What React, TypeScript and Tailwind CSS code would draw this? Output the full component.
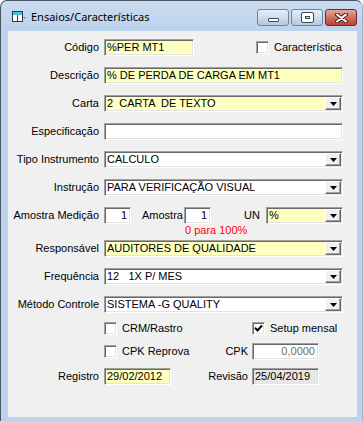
import React from "react";

const ui = "font-['Liberation_Sans',Arial,sans-serif] text-[11px] leading-[13px] text-black";

function Box({ className = "", children }: { className?: string; children?: React.ReactNode }) {
    return (
        <div
            className={`h-[17px] shrink-0 flex items-center border border-t-[#a0a0a0] border-l-[#a0a0a0] border-r-white border-b-white shadow-[inset_1px_1px_0_#696969,inset_-1px_-1px_0_#e3e3e3] ${className}`}
        >
            {children}
        </div>
    );
}

function Arrow() {
    return (
        <div className="ml-auto mr-[1px] h-[13px] w-[16px] shrink-0 flex items-center justify-center bg-[#f0f0f0] border border-t-white border-l-white border-r-[#696969] border-b-[#696969] shadow-[inset_-1px_-1px_0_#a0a0a0]">
            <svg width="7" height="4" viewBox="0 0 7 4">
                <path d="M0 0H7L3.5 4Z" fill="#000" />
            </svg>
        </div>
    );
}

function Select({ value, yellow, className = "w-[239px]" }: { value: string; yellow?: boolean; className?: string }) {
    return (
        <Box className={`${className} ${yellow ? "bg-[#ffffc0]" : "bg-white"}`}>
            <span className="pl-[2px] whitespace-pre truncate">{value}</span>
            <Arrow />
        </Box>
    );
}

function Check({ checked }: { checked?: boolean }) {
    return (
        <div className="h-[13px] w-[13px] shrink-0 bg-white border border-t-[#a0a0a0] border-l-[#a0a0a0] border-r-white border-b-white shadow-[inset_1px_1px_0_#696969,inset_-1px_-1px_0_#e3e3e3] flex items-center justify-center">
            {checked && (
                <svg width="9" height="9" viewBox="0 0 9 9">
                    <path d="M1 3.8L3.5 6.5L8 1.5" stroke="#000" strokeWidth="2" fill="none" />
                </svg>
            )}
        </div>
    );
}

function Row({ label, className = "mt-[11px]", children }: { label?: string; className?: string; children?: React.ReactNode }) {
    return (
        <div className={`flex items-center h-[17px] ${className}`}>
            <span className="w-[91px] shrink-0 text-right whitespace-nowrap">{label}</span>
            <div className="ml-[5px] flex items-center">{children}</div>
        </div>
    );
}

function TitleButton({ kind }: { kind: "min" | "max" | "close" }) {
    const base =
        kind === "close"
            ? "bg-gradient-to-b from-[#e4a89c] via-[#d0705f] to-[#c2402f] border-[#6b2a22]"
            : "bg-gradient-to-b from-[#e6eef8] via-[#cddcee] to-[#b4c8e0] border-[#71849c]";
    return (
        <div className={`w-[32px] h-[17px] rounded-[3px] border flex items-center justify-center ${base}`}>
            {kind === "min" && (
                <div className="mt-[5px] w-[11px] h-[4px] rounded-[1px] bg-white border border-[#3d4a5a]" />
            )}
            {kind === "max" && (
                <div className="w-[11px] h-[9px] rounded-[1px] border-[3px] border-white outline outline-1 outline-[#3d4a5a] shadow-[inset_0_0_0_1px_#3d4a5a]" />
            )}
            {kind === "close" && (
                <svg width="13" height="10" viewBox="0 0 13 10">
                    <path d="M2 1.5L11 8.5M11 1.5L2 8.5" stroke="#4a2420" strokeWidth="4" strokeLinecap="round" />
                    <path d="M2 1.5L11 8.5M11 1.5L2 8.5" stroke="#fff" strokeWidth="2" strokeLinecap="round" />
                </svg>
            )}
        </div>
    );
}

export default function App() {
    return (
        <div className="w-[363px] h-[421px] overflow-hidden bg-white">
            <div className="w-[363px] h-[421px] flex flex-col bg-[#bcd3ec] border-t border-l border-r border-t-[#4a5564] border-l-[#4a5564] border-r-[#9fb4cc] rounded-t-[7px]">
                {/* title bar */}
                <div className="h-[30px] shrink-0 flex items-center pl-[11px] pr-[5px] bg-gradient-to-b from-[#c9dbf0] to-[#bcd3ec] rounded-t-[7px]">
                    <svg width="14" height="12" viewBox="0 0 14 12" className="shrink-0 mt-[2px]">
                        <rect x="0.5" y="0.5" width="10" height="10" fill="#fff" stroke="#2d3a48" />
                        <rect x="1" y="1" width="9" height="3" fill="#3fc6d0" />
                        <rect x="5" y="4" width="1" height="6" fill="#2d3a48" />
                        <path d="M11 6H14L12.5 8Z" fill="#7c8794" />
                    </svg>
                    <span className="ml-[5px] font-['Noto_Sans',sans-serif] text-[11px] leading-[14px] text-black mt-[2px]">
                        Ensaios/Características
                    </span>
                    <div className="ml-auto flex gap-[2px] mt-[3px]">
                        <TitleButton kind="min" />
                        <TitleButton kind="max" />
                        <TitleButton kind="close" />
                    </div>
                </div>

                {/* client */}
                <div className="flex">
                    <div className={`ml-[7px] w-[349px] h-[386px] bg-[#f0f0f0] flex flex-col pt-[8px] ${ui}`}>
                        <Row label="Código" className="mt-0">
                            <Box className="w-[90px] bg-[#ffffc0]">
                                <span className="pl-[2px]">%PER MT1</span>
                            </Box>
                            <div className="ml-[62px] flex items-center">
                                <Check />
                                <span className="ml-[5px]">Característica</span>
                            </div>
                        </Row>
                        <Row label="Descrição">
                            <Box className="w-[239px] bg-[#ffffc0]">
                                <span className="pl-[2px]">% DE PERDA DE CARGA EM MT1</span>
                            </Box>
                        </Row>
                        <Row label="Carta">
                            <Select value="2  CARTA  DE TEXTO" yellow />
                        </Row>
                        <Row label="Especificação">
                            <Box className="w-[239px] bg-white" />
                        </Row>
                        <Row label="Tipo Instrumento">
                            <Select value="CALCULO" />
                        </Row>
                        <Row label="Instrução">
                            <Select value="PARA VERIFICAÇÃO VISUAL" />
                        </Row>
                        <Row label="Amostra Medição">
                            <Box className="w-[27px] bg-white justify-end">
                                <span className="pr-[3px]">1</span>
                            </Box>
                            <span className="ml-[11px] w-[42px]">Amostra</span>
                            <Box className="w-[27px] bg-white justify-end">
                                <span className="pr-[3px]">1</span>
                            </Box>
                            <span className="ml-[33px] w-[16px]">UN</span>
                            <Select value="%" yellow className="ml-[6px] w-[77px]" />
                        </Row>
                        <div className="h-[12px] pl-[177px] text-[#ff0000] leading-[12px]">0 para 100%</div>
                        <Row label="Responsável" className="mt-[4px]">
                            <Select value="AUDITORES DE QUALIDADE" yellow />
                        </Row>
                        <Row label="Frequência">
                            <Select value="12   1X P/ MES" />
                        </Row>
                        <Row label="Método Controle">
                            <Select value="SISTEMA -G QUALITY" />
                        </Row>
                        <Row className="mt-[7px]">
                            <div className="w-[148px] flex items-center">
                                <Check />
                                <span className="ml-[5px]">CRM/Rastro</span>
                            </div>
                            <Check checked />
                            <span className="ml-[5px]">Setup mensal</span>
                        </Row>
                        <Row className="mt-[6px]">
                            <div className="w-[118px] flex items-center">
                                <Check />
                                <span className="ml-[5px]">CPK Reprova</span>
                            </div>
                            <span className="w-[26px] text-right">CPK</span>
                            <Box className="ml-[4px] w-[67px] bg-white justify-end">
                                <span className="pr-[3px] text-[#6d6d6d]">0,0000</span>
                            </Box>
                        </Row>
                        <Row label="Registro" className="mt-[8px]">
                            <Box className="w-[67px] bg-[#ffffc0]">
                                <span className="pl-[2px]">29/02/2012</span>
                            </Box>
                            <span className="w-[77px] text-right">Revisão</span>
                            <Box className="ml-[4px] w-[67px] bg-[#e6e6e6]">
                                <span className="pl-[2px]">25/04/2019</span>
                            </Box>
                        </Row>
                    </div>
                </div>
            </div>
        </div>
    );
}
